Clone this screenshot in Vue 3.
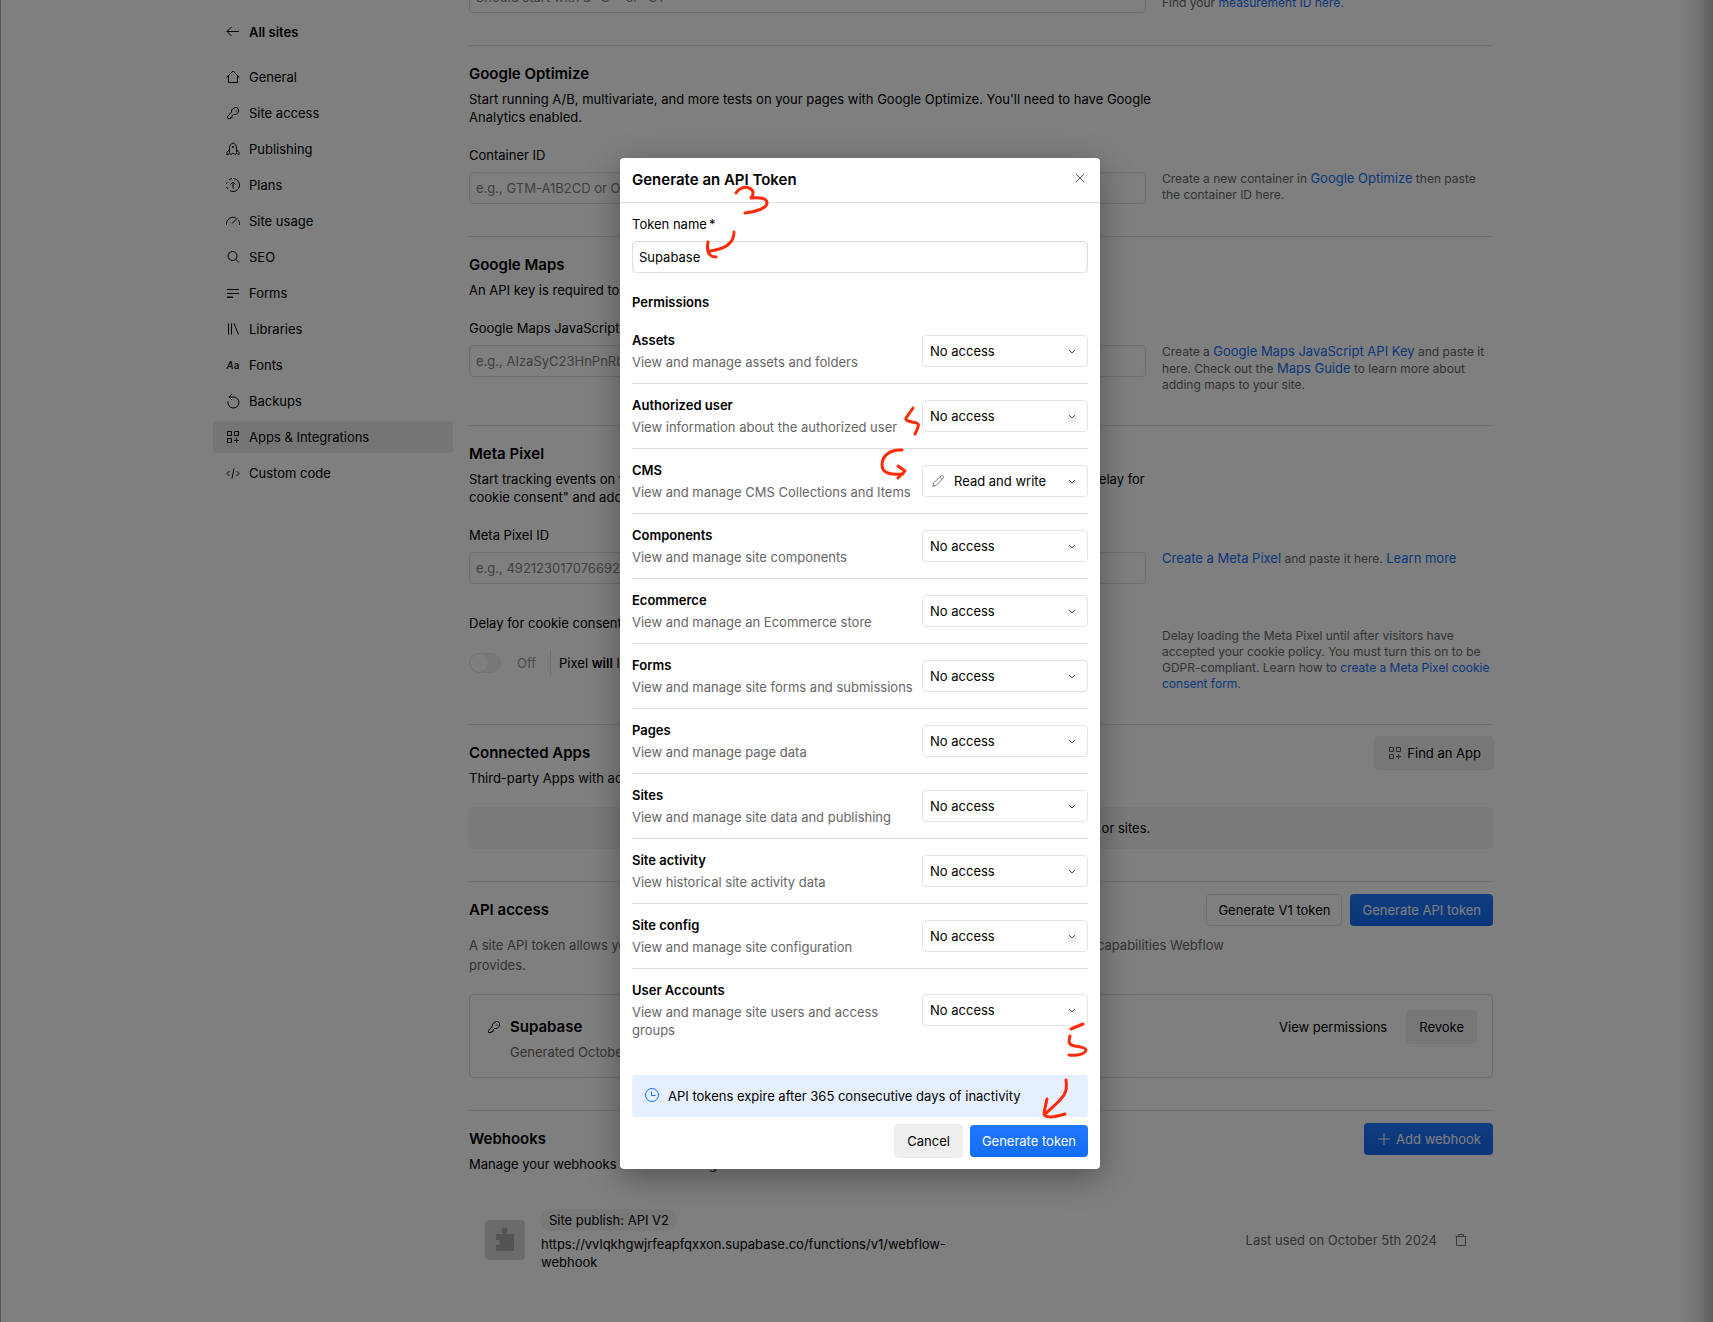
<script setup>
import { ref } from 'vue'

const nav = [
  { label: 'General', icon: 'home' },
  { label: 'Site access', icon: 'key' },
  { label: 'Publishing', icon: 'rocket' },
  { label: 'Plans', icon: 'plan' },
  { label: 'Site usage', icon: 'gauge' },
  { label: 'SEO', icon: 'search' },
  { label: 'Forms', icon: 'lines' },
  { label: 'Libraries', icon: 'books' },
  { label: 'Fonts', icon: 'fonts' },
  { label: 'Backups', icon: 'undo' },
  { label: 'Apps & Integrations', icon: 'apps', active: true },
  { label: 'Custom code', icon: 'code' }
]

const icons = {
  home: 'M1.5 8.5L8 2l6.5 6.5M3.5 7v6.5h9V7',
  key: 'M10 2.5h1.5l2 1.5v3l-2.5 2.5H8.5L7 11v1.5H5.500V13.500H2.500V11.500L6.500 7V5zM11 5.500v1',
  rocket: 'M4.500 11.500V7C4.500 4.500 6 2.500 8 2c2 .5 3.500 2.500 3.500 5v4.500M4.500 8.500L2 11.500v2.500l2.500-1.500 1.500 1 2-1.500 2 1.500 1.500-1 2.500 1.500v-2.500L11.500 8.500M7.500 5.500h1v1h-1z',
  plan: 'M8 1.500a6.500 6.500 0 0 1 0 13M8 14.500c-1 0-2-.2-3-.8M2.800 12c-.5-.6-.8-1.200-1-2M1.500 7c.1-.8.4-1.500.8-2.200M4 3c.8-.7 1.800-1.200 3-1.400M8 11.500V5M5.500 7.500L8 5l2.500 2.500',
  gauge: 'M1.500 12V10.500a6.500 6.500 0 0 1 9.500-5.500M13.500 7c.6 1 1 2.200 1 3.500V12M7 10.500L12.500 5',
  search: 'M12 7a4.500 4.500 0 1 1-9 0a4.500 4.500 0 1 1 9 0M10.800 10.300L14 13.500',
  lines: 'M2 4.500h12M2 8.500h12M2 12h6M2 12.500h6',
  books: 'M3.500 2.500v11M6.500 2.500v11M9 2.500l4.500 11',
  undo: 'M3 8.500a5.500 5.500 0 1 0 5.500-4.500H4M7 1L4 4l3 3',
  apps: 'M2.500 2.500h4v4h-4zM9.500 2.500h4v4h-4zM2.500 9.500h4v4h-4zM11.500 9v5M9 11.500h5',
  code: 'M4.500 6L2 8.500l2.500 2.500M11.500 6L14 8.500 11.500 11M9 3.500l-2 10'
}

const permissions = ref([
  { id: 'assets', name: 'Assets', text: 'View and manage assets and folders', value: 'No access' },
  { id: 'user', name: 'Authorized user', text: 'View information about the authorized user', value: 'No access' },
  { id: 'cms', name: 'CMS', text: 'View and manage CMS Collections and Items', value: 'Read and write' },
  { id: 'components', name: 'Components', text: 'View and manage site components', value: 'No access' },
  { id: 'ecommerce', name: 'Ecommerce', text: 'View and manage an Ecommerce store', value: 'No access' },
  { id: 'forms', name: 'Forms', text: 'View and manage site forms and submissions', value: 'No access' },
  { id: 'pages', name: 'Pages', text: 'View and manage page data', value: 'No access' },
  { id: 'sites', name: 'Sites', text: 'View and manage site data and publishing', value: 'No access' },
  { id: 'activity', name: 'Site activity', text: 'View historical site activity data', value: 'No access' },
  { id: 'config', name: 'Site config', text: 'View and manage site configuration', value: 'No access' },
  { id: 'accounts', name: 'User Accounts', text: 'View and manage site users and access groups', value: 'No access' }
])
const tokenName = ref('Supabase')
</script>

<template>
  <div class="page">
    <div class="container">
      <nav class="sidebar">
        <a href="#" class="nav-item back">
          <svg class="icon" viewBox="0 0 16 16"><path d="M2 7.500h12M6.500 3L2 7.500 6.500 12" /></svg>
          All sites
        </a>
        <a v-for="item in nav" :key="item.label" href="#" class="nav-item" :class="{ active: item.active }">
          <span v-if="item.icon === 'fonts'" class="icon aa"><i>A</i>a</span>
          <svg v-else class="icon" viewBox="0 0 16 16"><path :d="icons[item.icon]" /></svg>
          {{ item.label }}
        </a>
      </nav>

      <main class="main">
        <section class="section first">
          <div class="field">
            <input id="ga" class="input" placeholder="Should start with a &quot;G-&quot; or &quot;GT-&quot;" aria-label="Measurement ID" />
            <p class="help">Copy your ID from Analytics.<br />Find your <a href="#">measurement ID here.</a></p>
          </div>
        </section>

        <section class="section">
          <header class="head"><h2>Google Optimize</h2></header>
          <p class="desc">Start running A/B, multivariate, and more tests on your pages with Google Optimize. You'll need to have Google Analytics enabled.</p>
          <label class="label" for="gtm">Container ID</label>
          <div class="field">
            <input id="gtm" class="input" placeholder="e.g., GTM-A1B2CD or OPT-A1B2CD" />
            <p class="help">Create a new container in <a href="#" class="big">Google Optimize</a> then paste the container ID here.</p>
          </div>
        </section>

        <section class="section">
          <header class="head"><h2>Google Maps</h2></header>
          <p class="desc">An API key is required to use Google Maps on your site.</p>
          <label class="label" for="maps">Google Maps JavaScript API Key</label>
          <div class="field">
            <input id="maps" class="input" placeholder="e.g., AIzaSyC23HnPnRbT0a1kq" />
            <p class="help">Create a <a href="#" class="big">Google Maps JavaScript API Key</a> and paste it here. Check out the <a href="#" class="big">Maps Guide</a> to learn more about adding maps to your site.</p>
          </div>
        </section>

        <section class="section">
          <header class="head"><h2>Meta Pixel</h2></header>
          <p class="desc">Start tracking events on your site with the Meta Pixel. You will need to turn on all the settings for the "Delay for cookie consent" and add a consent form.</p>
          <label class="label" for="meta">Meta Pixel ID</label>
          <div class="field">
            <input id="meta" class="input" placeholder="e.g., 492123017076692" />
            <p class="help"><a href="#" class="big">Create a Meta Pixel</a> and paste it here. <a href="#" class="big">Learn more</a></p>
          </div>
          <div class="field consent">
            <div>
              <label class="label" for="delay">Delay for cookie consent</label>
              <div class="toggle-row">
                <input id="delay" type="checkbox" class="toggle" />
                <span class="off">Off</span>
                <p class="toggle-text">Pixel <b>will</b> load immediately</p>
              </div>
            </div>
            <p class="help">Delay loading the Meta Pixel until after visitors have accepted your cookie policy. You must turn this on to be GDPR-compliant. Learn how to <a href="#">create a Meta Pixel cookie consent form.</a></p>
          </div>
        </section>

        <section class="section">
          <header class="head">
            <h2>Connected Apps</h2>
            <button class="btn gray"><svg class="icon thin" viewBox="0 0 16 16"><path :d="icons.apps" /></svg>Find an App</button>
          </header>
          <p class="desc">Third-party Apps with access to this site.</p>
          <p class="empty">There are no Apps installed for this workspace or sites.</p>
        </section>

        <section class="section">
          <header class="head">
            <h2>API access</h2>
            <div class="actions">
              <button class="btn outline">Generate V1 token</button>
              <button class="btn blue">Generate API token</button>
            </div>
          </header>
          <p class="api-desc">A site API token allows you to access the data of this site and to build with the many different data API capabilities Webflow provides.</p>
          <div class="card">
            <svg class="icon card-icon" viewBox="0 0 16 16"><path :d="icons.key" /></svg>
            <div class="card-body">
              <h3>Supabase</h3>
              <p>Generated October 5th 2024</p>
            </div>
            <div class="card-actions">
              <button class="btn ghost">View permissions</button>
              <button class="btn gray">Revoke</button>
            </div>
          </div>
        </section>

        <section class="section">
          <header class="head">
            <h2>Webhooks</h2>
            <button class="btn blue"><svg class="icon" viewBox="0 0 16 16"><path d="M8 2v12M2 8h12" /></svg>Add webhook</button>
          </header>
          <p class="desc">Manage your webhooks and view changes</p>
          <div class="hook">
            <div class="hook-icon">
              <svg viewBox="0 0 20 24"><path d="M1 6h6.500V4.500a3 3 0 1 1 4 0V6H19v17H1v-6h1.500a2.500 2.500 0 1 0 0-5H1z" /></svg>
            </div>
            <div class="hook-body">
              <span class="pill">Site publish: API V2</span>
              <p>https://vvlqkhgwjrfeapfqxxon.supabase.co/functions/v1/webflow-webhook</p>
            </div>
            <span class="hook-date">Last used on October 5th 2024</span>
            <button class="trash" aria-label="Delete webhook"><svg class="icon" viewBox="0 0 16 16"><path d="M2.500 4.500h11M5.500 4V2.500h5V4M3.500 4.500v9h9v-9" /></svg></button>
          </div>
        </section>
      </main>
    </div>

    <div class="overlay">
      <div class="modal" role="dialog" aria-labelledby="modal-title">
        <header class="modal-head">
          <h1 id="modal-title">Generate an API Token</h1>
          <button class="close" aria-label="Close"><svg class="icon" viewBox="0 0 16 16"><path d="M4 4l8 8M12 4l-8 8" /></svg></button>
        </header>
        <div class="modal-body">
          <label class="token-label" for="token">Token name<span>*</span></label>
          <input id="token" v-model="tokenName" class="input" />
          <h2 class="perm-title">Permissions</h2>
          <div v-for="p in permissions" :key="p.id" class="perm">
            <div class="perm-text">
              <label :for="p.id">{{ p.name }}</label>
              <p>{{ p.text }}</p>
            </div>
            <div class="select-wrap" :class="{ write: p.value === 'Read and write' }">
              <select :id="p.id" v-model="p.value">
                <option>No access</option>
                <option>Read-only</option>
                <option>Read and write</option>
              </select>
              <svg v-if="p.value === 'Read and write'" class="icon pencil" viewBox="0 0 16 16"><path d="M3 13.500l.5-3.500 7.500-7c.8-.7 1.600-.6 2.200 0 .6.600.6 1.400 0 2.200L6 12.500zM9.800 4.200l2.200 2.200" /></svg>
              <svg class="icon chevron" viewBox="0 0 16 16"><path d="M5 7l3 3 3-3" /></svg>
            </div>
          </div>
          <div class="notice">
            <svg class="icon" viewBox="0 0 16 16"><path d="M14.500 8a6.500 6.500 0 1 1-13 0a6.500 6.500 0 1 1 13 0M7.500 4.500v4h4" /></svg>
            API tokens expire after 365 consecutive days of inactivity
          </div>
          <footer class="modal-foot">
            <button class="btn gray">Cancel</button>
            <button class="btn blue">Generate token</button>
          </footer>
        </div>
        <svg class="marks" viewBox="0 0 480 1011" aria-hidden="true">
          <path d="M116 35C119 30 125 28 129 30C134 32 134 36 131 40C139 39 147 40 147 45C147 50 136 54 125 55" />
          <path d="M114 74C114 84 106 91 90 93M88 84C87 90 87 94 90 97C92 99 94 99 96 99" />
          <path d="M293 250L286 260C285 263 289 263 292 264C300 265 300 266 295 276" />
          <path d="M282 292C270 291 262 298 262 307C262 316 272 317 283 316M278 308L285 313L278 320" />
          <path d="M451 871L463 866M450 878C448 885 449 887 455 888C462 889 466 890 466 892C465 896 458 898 449 897" />
          <path d="M446 922C448 934 446 938 425 956M427 941L424 955C424 960 432 960 445 956" />
        </svg>
      </div>
    </div>
  </div>
</template>

<style>
body {
  margin: 0;
}
</style>

<style scoped>
.page,
.page * {
  box-sizing: border-box;
}
.page {
  position: relative;
  min-height: 100vh;
  padding-right: 7px;
  overflow: hidden;
  background: #fff;
  color: #000;
  font: 13px/18px Inter, "Liberation Sans", sans-serif;
}
h1, h2, h3, p {
  margin: 0;
  font-weight: 400;
}
a {
  color: #146ef5;
  text-decoration: none;
}
button, input, select {
  font: inherit;
  color: inherit;
}
.icon {
  width: 16px;
  height: 16px;
  flex: none;
  fill: none;
  stroke: currentColor;
  stroke-width: 1;
}
.container {
  display: flex;
  gap: 16px;
  max-width: 1280px;
  margin: 0 auto;
}
.sidebar {
  display: flex;
  flex-direction: column;
  flex: 0 0 240px;
  gap: 4px;
  padding-top: 16px;
}
.nav-item {
  display: flex;
  align-items: center;
  gap: 8px;
  height: 32px;
  padding: 0 12px;
  border-radius: 4px;
  color: inherit;
}
.nav-item.back {
  margin-bottom: 9px;
  font-weight: 600;
}
.nav-item.active {
  background: #ebebeb;
}
.aa {
  font-size: 10px;
  line-height: 16px;
  font-weight: 500;
  text-align: center;
}
.main {
  flex: 1;
  min-width: 0;
}
.section {
  padding: 12px 0 32px;
  border-top: 1px solid #dedede;
}
.section.first {
  margin-top: -19px;
  padding-top: 0;
  border-top: 0;
}
.head {
  display: flex;
  align-items: center;
  justify-content: space-between;
  height: 32px;
}
.head h2 {
  font-size: 15px;
  font-weight: 600;
}
.desc {
  max-width: 690px;
  font-variant-ligatures: no-contextual;
}
.label {
  display: block;
  margin: 20px 0 8px;
}
.field {
  display: grid;
  grid-template-columns: 1fr 331px;
  align-items: start;
  gap: 16px;
}
.help {
  margin-top: -2px;
  font-size: 12px;
  line-height: 16px;
  color: #666;
}
.help .big {
  font-size: 13px;
}
.input {
  display: block;
  width: 100%;
  height: 32px;
  padding: 0 6px;
  border: 1px solid #dedede;
  border-radius: 4px;
  background: #fff;
  box-shadow: inset 0 2px 4px rgba(0, 0, 0, 0.04);
  outline: 0;
}
.input::placeholder {
  color: #808080;
  opacity: 1;
}
.consent {
  margin-top: 10px;
}
.consent .help {
  margin-top: 34px;
}
.toggle-row {
  display: flex;
  align-items: center;
  margin-top: 18px;
}
.toggle {
  appearance: none;
  width: 32px;
  height: 20px;
  margin: 0 16px 0 0;
  border: 1px solid #e8e8e8;
  border-radius: 10px;
  background: radial-gradient(circle at 9px 9px, #fff 8px, #f0f0f0 9px);
}
.off {
  color: #999;
}
.toggle-text {
  margin-left: 14px;
  padding: 4px 8px;
  border-left: 1px solid #dedede;
}
.toggle-text b {
  font-weight: 600;
}
.btn {
  display: flex;
  align-items: center;
  gap: 4px;
  height: 32px;
  padding: 0 12px;
  border: 0;
  border-radius: 4px;
  white-space: nowrap;
}
.btn.gray {
  background: #efefef;
  box-shadow: 0 0 0 1px #ebebeb, 0 -1px 1px 0 rgba(0, 0, 0, 0.15);
}
.btn.blue {
  background: linear-gradient(#1f78ff, #146ef5);
  color: #fff;
}
.btn.outline {
  padding: 0 11px;
  border: 1px solid #dedede;
  background: #fff;
}
.btn.ghost {
  background: none;
}
.thin {
  color: #555;
}
.actions {
  display: flex;
  gap: 8px;
}
.empty {
  margin-top: 20px;
  padding: 12px;
  border-radius: 4px;
  background: #f5f5f5;
  text-align: center;
}
.api-desc {
  max-width: 768px;
  margin: 9px 0 19px;
  line-height: 20px;
  color: #666;
}
.card {
  display: flex;
  gap: 8px;
  padding: 16px;
  border: 1px solid #dedede;
  border-radius: 4px;
}
.card-icon {
  margin-top: 8px;
}
.card-body {
  flex: 1;
}
.card-body h3 {
  font-size: 15px;
  line-height: 32px;
  font-weight: 600;
}
.card-body p {
  color: #666;
}
.card-actions {
  display: flex;
  align-items: flex-start;
  gap: 8px;
}
.hook {
  display: flex;
  align-items: center;
  margin-top: 36px;
  padding: 0 16px;
}
.hook-icon {
  display: flex;
  align-items: center;
  justify-content: center;
  width: 40px;
  height: 40px;
  border-radius: 4px;
  background: #d5d8d9;
}
.hook-icon svg {
  width: 20px;
  height: 24px;
  fill: #a3a6a8;
}
.hook-body {
  width: 420px;
  margin: 0 auto 0 16px;
}
.hook-body p {
  margin-top: 4px;
}
.pill {
  display: inline-block;
  padding: 2px 8px;
  border-radius: 11px;
  background: #f2f2f2;
}
.hook-date {
  color: #666;
}
.trash {
  display: flex;
  margin: 0 8px 0 16px;
  padding: 0;
  border: 0;
  background: none;
  color: #777;
}
.overlay {
  position: absolute;
  inset: 0;
  display: flex;
  align-items: center;
  justify-content: center;
  padding: 5px 0 0 7px;
  background: linear-gradient(to left, rgba(0, 0, 0, 0.26), rgba(0, 0, 0, 0.08) 16px, transparent 36px), rgba(0, 0, 0, 0.5);
  box-shadow: inset 1px 0 0 rgba(0, 0, 0, 0.3);
}
.modal {
  position: relative;
  width: 480px;
  border-radius: 4px;
  background: #fff;
  box-shadow: 0 8px 32px rgba(0, 0, 0, 0.35);
}
.modal-head {
  display: flex;
  align-items: center;
  justify-content: space-between;
  height: 45px;
  padding: 0 12px;
  border-bottom: 1px solid #dedede;
}
.modal-head h1 {
  font-size: 15px;
  font-weight: 600;
}
.close {
  display: flex;
  margin-bottom: 4px;
  padding: 0;
  border: 0;
  background: none;
  color: #555;
}
.modal-body {
  padding: 12px;
}
.token-label {
  display: block;
  margin-bottom: 8px;
}
.token-label span {
  margin-left: 2px;
}
.perm-title {
  margin: 20px 0 8px;
  font-size: 13px;
  font-weight: 600;
}
.perm {
  display: flex;
  align-items: center;
  justify-content: space-between;
  padding: 12px 0;
  border-bottom: 1px solid #dedede;
}
.perm:nth-last-child(3) {
  border-bottom: 0;
}
.perm-text {
  flex: 1;
}
.perm label {
  font-weight: 600;
}
.perm p {
  margin-top: 4px;
  color: #666;
}
.select-wrap {
  position: relative;
  flex: 0 0 166px;
  margin: -4px 0;
}
.select-wrap select {
  display: block;
  appearance: none;
  width: 100%;
  height: 32px;
  padding: 0 7px;
  border: 1px solid #e3e3e3;
  border-radius: 4px;
  background: #fff;
}
.write select {
  padding-left: 31px;
}
.chevron {
  position: absolute;
  top: 8px;
  right: 8px;
  color: #444;
  pointer-events: none;
}
.pencil {
  position: absolute;
  top: 8px;
  left: 8px;
  color: #777;
  pointer-events: none;
}
.notice {
  display: flex;
  align-items: flex-start;
  gap: 8px;
  margin: 24px 0 8px;
  padding: 12px;
  border-radius: 4px;
  background: #e5effe;
}
.notice .icon {
  color: #146ef5;
}
.modal-foot {
  display: flex;
  justify-content: flex-end;
  gap: 8px;
}
.marks {
  position: absolute;
  inset: 0;
  width: 100%;
  height: 100%;
  fill: none;
  stroke: #ff2b0a;
  stroke-width: 3;
  stroke-linecap: round;
  stroke-linejoin: round;
  pointer-events: none;
}
</style>
